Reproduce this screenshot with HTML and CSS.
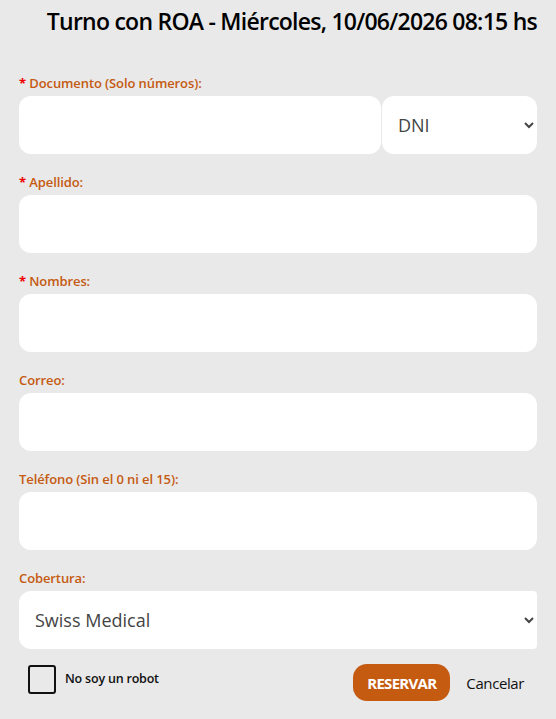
FILE: index.html
```html
<!DOCTYPE html>
<html lang="es">
  <head>
    <meta charset="UTF-8" />
    <meta name="viewport" content="width=device-width, initial-scale=1.0" />
    <title>Turno con ROA</title>
    <link rel="stylesheet" href="styles.css">
  </head>
  <body>
    <div class="turno">
      <h2 class="titulo">Turno con ROA - Miércoles, 10/06/2026 08:15 hs</h2>

      <form class="formulario">
        <div class="campo">
          <label><span class="req">*</span> Documento (Solo números):</label>
          <div class="doc-row">
            <input type="text" class="input doc-num">
            <select class="input doc-tipo">
              <option>DNI</option>
              <option>LC</option>
              <option>LE</option>
              <option>Pasaporte</option>
            </select>
          </div>
        </div>
        <div class="campo">
          <label><span class="req">*</span> Apellido:</label>
          <input type="text" class="input">
        </div>
        <div class="campo">
          <label><span class="req">*</span> Nombres:</label>
          <input type="text" class="input">
        </div>
        <div class="campo">
          <label>Correo:</label>
          <input type="email" class="input">
        </div>
        <div class="campo">
          <label>Teléfono (Sin el 0 ni el 15):</label>
          <input type="text" class="input">
        </div>
        <div class="campo">
          <label>Cobertura:</label>
          <select class="input cobertura">
            <option>Swiss Medical</option>
            <option>OSDE</option>
            <option>Particular</option>
          </select>
        </div>

        <div class="acciones">
          <div class="robot">
            <span class="check"></span>
            <span class="robot-txt">No soy un robot</span>
          </div>
          <div class="botones">
            <button type="button" class="reservar">RESERVAR</button>
            <button type="button" class="cancelar">Cancelar</button>
          </div>
        </div>
      </form>
    </div>
  </body>
</html>
```

FILE: styles.css
```css
* {
  margin: 0;
  padding: 0;
  box-sizing: border-box;
}
body {
  background-color: #e9e9e9;
  font-family: "Open Sans", "Noto Sans", sans-serif;
}
.turno {
  width: 556px;
  padding: 0 19px;
}
.titulo {
  font-size: 23px;
  font-weight: 560;
  color: #000;
  text-align: right;
  letter-spacing: -0.75px;
  height: 75px;
  padding-top: 5px;
}
.campo {
  margin-bottom: 20px;
}
.campo label {
  display: block;
  font-size: 13px;
  font-weight: 600;
  line-height: 16px;
  color: #c55a11;
  margin-bottom: 5px;
  letter-spacing: -0.1px;
}
.req {
  color: #e00;
  font-weight: 700;
}
.input {
  display: block;
  width: 100%;
  height: 58px;
  border: none;
  border-radius: 12px;
  background-color: #fff;
  font-family: "Open Sans", sans-serif;
  font-size: 18px;
  color: #444;
  padding: 0 12px;
  outline: none;
}
.doc-row {
  display: flex;
  gap: 1px;
}
.doc-num {
  width: 362px;
}
.doc-tipo {
  width: 155px;
}
.cobertura {
  border-radius: 12px 4px 4px 12px;
}
.acciones {
  display: flex;
  justify-content: space-between;
  align-items: flex-start;
  margin-top: -5px;
}
.robot {
  display: flex;
  align-items: center;
  gap: 9px;
  padding-left: 9px;
}
.check {
  width: 28px;
  height: 29px;
  border: 2px solid #111;
  border-radius: 3px;
  margin-top: 1px;
}
.robot-txt {
  font-size: 12.5px;
  font-weight: 600;
  color: #111;
  letter-spacing: -0.2px;
  margin-top: -2px;
}
.botones {
  display: flex;
  align-items: center;
  gap: 16px;
  padding-right: 13px;
}
.reservar {
  width: 97px;
  height: 37px;
  border: none;
  border-radius: 14px;
  background-color: #c55a11;
  color: #fff;
  font-family: "Open Sans", sans-serif;
  font-weight: 700;
  font-size: 15px;
  letter-spacing: -0.7px;
  cursor: pointer;
}
.cancelar {
  border: none;
  background: none;
  font-family: "Open Sans", sans-serif;
  font-size: 15px;
  font-weight: 500;
  color: #111;
  letter-spacing: -0.4px;
  cursor: pointer;
}
```
